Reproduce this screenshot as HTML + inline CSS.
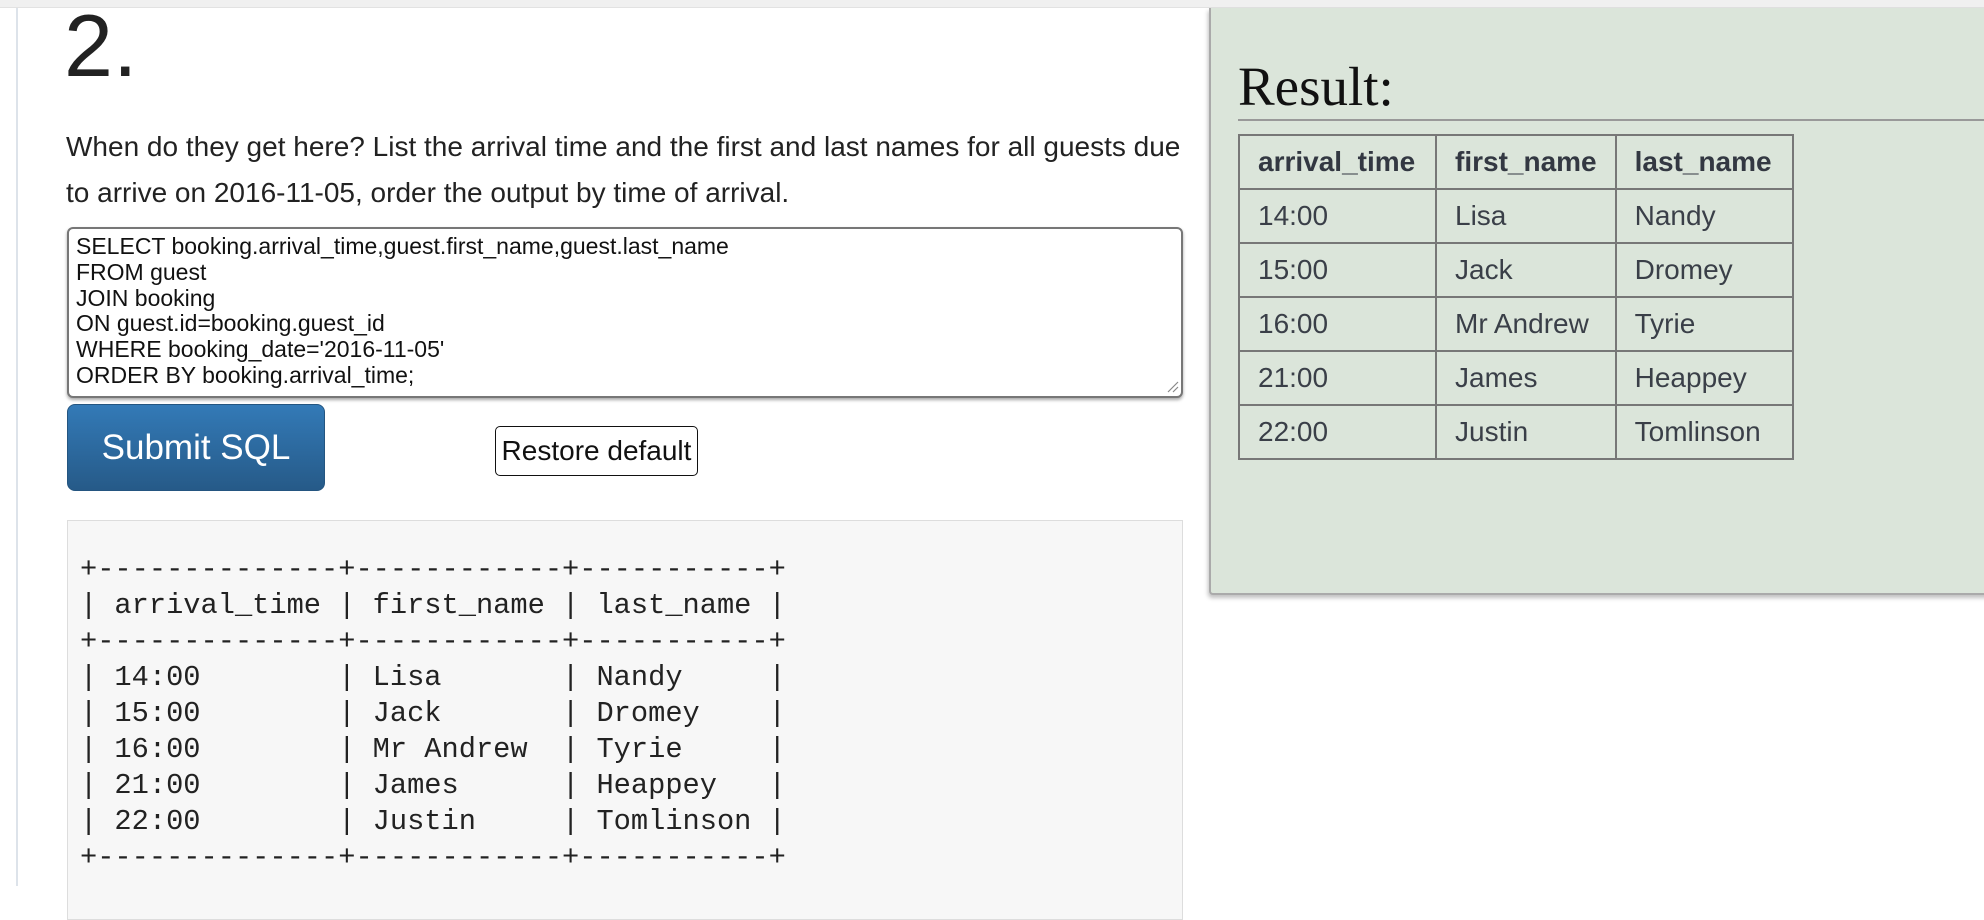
<!DOCTYPE html>
<html><head><meta charset="utf-8"><style>
*{margin:0;padding:0;box-sizing:border-box}
body{width:1984px;height:886px;overflow:hidden;background:#fff;position:relative;font-family:"Liberation Sans",Arial,sans-serif;color:#222}
.abs{position:absolute;white-space:pre}
#topbar{position:absolute;left:0;top:0;width:1984px;height:8px;background:#f0f0f0;border-bottom:1px solid #e2e2e2}
#vline{position:absolute;left:16px;top:8px;width:2px;height:878px;background:#dde3ea}
#num{left:64px;top:-4px;font-size:88px;color:#222;line-height:100px}
#q{left:66px;top:124px;font-size:28px;line-height:46px;color:#222;white-space:normal;width:1122px}
#ta{left:67px;top:227px;width:1116px;height:171px;border:2px solid #777;border-radius:6px;box-shadow:0 2px 3px rgba(0,0,0,.35);background:#fff}
#sql{left:76px;top:234px;font-size:23px;line-height:25.8px;color:#111}
#btn{left:67px;top:404px;width:258px;height:87px;border-radius:8px;background:linear-gradient(#337ab7,#265a88);border:1px solid #245580;color:#fff;font-size:35px;line-height:85px;text-align:center}
#rst{left:495px;top:426px;width:203px;height:50px;border:1.5px solid #111;border-radius:5px;font-size:28px;line-height:47px;text-align:center;color:#111;background:#fff}
#pre{left:67px;top:520px;width:1116px;height:400px;background:#f7f7f7;border:1px solid #ddd}
#mono{left:80px;top:552px;font-family:"Liberation Mono","Courier New",monospace;font-size:28.7px;line-height:36px;color:#222}
#panel{left:1209px;top:8px;width:790px;height:587px;background:#dbe5da;border-left:2px solid #aaa;border-bottom:2px solid #aaa;border-radius:0 0 0 4px;box-shadow:-1px 3px 4px rgba(0,0,0,.25)}
#res{left:1238px;top:52px;font-family:"Liberation Serif",Georgia,serif;font-size:55px;line-height:70px;color:#111}
#hr{left:1238px;top:119px;width:746px;height:2px;background:#999}
table{position:absolute;left:1238px;top:134px;border-collapse:collapse;font-size:28px;color:#3a3f48}
td,th{border:2px solid #777;height:54px;padding:0 18px;text-align:left;white-space:nowrap}
th{font-weight:bold;color:#333842}
</style></head><body>
<div id="topbar"></div><div id="vline"></div>
<div class="abs" id="num">2.</div>
<div class="abs" id="q">When do they get here? List the arrival time and the first and last names for all guests due to arrive on 2016-11-05, order the output by time of arrival.</div>
<div class="abs" id="ta"></div>
<div class="abs" id="sql">SELECT booking.arrival_time,guest.first_name,guest.last_name
FROM guest
JOIN booking
ON guest.id=booking.guest_id
WHERE booking_date='2016-11-05'
ORDER BY booking.arrival_time;</div>
<svg class="abs" style="left:1166px;top:380px" width="14" height="14"><path d="M2 12L12 2M7 12L12 7" stroke="#888" stroke-width="1.2"/></svg>
<div class="abs" id="btn">Submit SQL</div>
<div class="abs" id="rst">Restore default</div>
<div class="abs" id="pre"></div>
<div class="abs" id="mono">+--------------+------------+-----------+
| arrival_time | first_name | last_name |
+--------------+------------+-----------+
| 14:00        | Lisa       | Nandy     |
| 15:00        | Jack       | Dromey    |
| 16:00        | Mr Andrew  | Tyrie     |
| 21:00        | James      | Heappey   |
| 22:00        | Justin     | Tomlinson |
+--------------+------------+-----------+</div>
<div class="abs" id="panel"></div>
<div class="abs" id="res">Result:</div>
<div class="abs" id="hr"></div>
<table>
<tr><th style="width:197px">arrival_time</th><th style="width:179px">first_name</th><th style="width:177px">last_name</th></tr>
<tr><td>14:00</td><td>Lisa</td><td>Nandy</td></tr>
<tr><td>15:00</td><td>Jack</td><td>Dromey</td></tr>
<tr><td>16:00</td><td>Mr Andrew</td><td>Tyrie</td></tr>
<tr><td>21:00</td><td>James</td><td>Heappey</td></tr>
<tr><td>22:00</td><td>Justin</td><td>Tomlinson</td></tr>
</table>
</body></html>
